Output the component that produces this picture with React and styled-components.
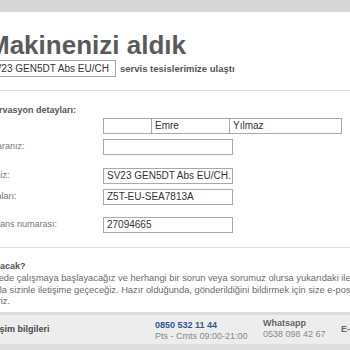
import React from 'react'
import styled, {createGlobalStyle} from 'styled-components'

const GlobalStyle = createGlobalStyle`
  body {
    margin: 0;
    background: #fff;
    font-family: "Liberation Sans", Arial, sans-serif;
  }
`

const rows = [
  {label: 'Numaranız:', value: '', top: 5},
  {label: 'Aletiniz:', value: 'SV23 GEN5DT Abs EU/CH.', top: 13},
  {label: 'Parçaları:', value: 'Z5T-EU-SEA7813A', top: 5},
  {label: 'Referans numarası:', value: '27094665', top: 12},
]

function App() {
  return (
    <Page>
      <GlobalStyle />
      <TopBar />
      <Shift>
        <Header>
          <Title>Makinenizi aldık</Title>
          <SubLine>
            <ModelBox>SV23 GEN5DT Abs EU/CH</ModelBox>
            <SubText>servis tesislerimize ulaştı</SubText>
          </SubLine>
        </Header>
        <Divider top={13} />

        <Section>
          <Heading top={13}>Rezervasyon detayları:</Heading>
          <FormRow top={2}>
            <Label />
            <NameGroup>
              <Field w={49} />
              <Field w={79}>Emre</Field>
              <Field w={113}>Yılmaz</Field>
            </NameGroup>
          </FormRow>
          {rows.map((r, i) => (
            <FormRow key={i} top={r.top}>
              <Label>{r.label}</Label>
              <Field w={130}>{r.value}</Field>
            </FormRow>
          ))}
        </Section>
        <Divider top={14} />

        <Section>
          <Heading top={12}>Ne olacak?</Heading>
          <Para>
            Atölyede çalışmaya başlayacağız ve herhangi bir sorun veya sorumuz olursa yukarıdaki iletişim bilgileriniz<br />
            yoluyla sizinle iletişime geçeceğiz. Hazır olduğunda, gönderildiğini bildirmek için size e-posta<br />
            çekeriz.
          </Para>
        </Section>

        <Footer>
          <FooterTitle>İletişim bilgileri</FooterTitle>
          <Contact w={108} shift={3}>
            <Phone>0850 532 11 44</Phone>
            <Note>Pts - Cmts 09:00-21:00</Note>
          </Contact>
          <Contact w={78}>
            <Strong>Whatsapp</Strong>
            <Note>0538 098 42 67</Note>
          </Contact>
          <Contact w={80}>
            <Strong>E-posta</Strong>
          </Contact>
        </Footer>
        <FooterBase />
      </Shift>
    </Page>
  )
}

export default App

const Page = styled.div`
width: 350px;
height: 350px;
overflow: hidden;
background: #fff;
`

const TopBar = styled.div`
height: 12px;
background: #d6d6d6;
`

const Shift = styled.div`
margin-left: -22px;
width: 480px;
`

const Header = styled.div`
padding: 16px 0 0 10px;
`

const Title = styled.h1`
margin: 0;
font-size: 26px;
line-height: 34px;
font-weight: bold;
color: #5a5a5a;
white-space: nowrap;
`

const SubLine = styled.div`
display: flex;
align-items: center;
gap: 4px;
margin: -2px 0 0 -3px;
`

const ModelBox = styled.div`
box-sizing: border-box;
width: 131px;
height: 17px;
border: 1px solid #a9a9a9;
padding: 0 2px;
font-size: 10px;
line-height: 15px;
color: #333;
white-space: nowrap;
overflow: hidden;
`

const SubText = styled.span`
font-size: 9.5px;
font-weight: bold;
color: #555;
white-space: nowrap;
`

const Divider = styled.div`
margin-top: ${p => p.top}px;
border-top: 1px solid #dedede;
`

const Section = styled.div`
display: flex;
flex-direction: column;
`

const Heading = styled.div`
margin-top: ${p => p.top}px;
font-size: 9px;
line-height: 12px;
font-weight: bold;
color: #555;
white-space: nowrap;
`

const FormRow = styled.div`
display: grid;
grid-template-columns: 125px auto;
align-items: center;
margin-top: ${p => p.top}px;
`

const Label = styled.div`
font-size: 9px;
line-height: 12px;
color: #777;
margin-top: -2px;
white-space: nowrap;
`

const NameGroup = styled.div`
display: flex;
& > div + div {
  margin-left: -1px;
}
`

const Field = styled.div`
box-sizing: border-box;
width: ${p => p.w}px;
height: 16px;
border: 1px solid #a9a9a9;
padding: 0 3px;
font-size: 10px;
line-height: 14px;
color: #333;
white-space: nowrap;
overflow: hidden;
background: #fff;
`

const Para = styled.p`
margin: 1px 0 0;
font-size: 9.3px;
line-height: 11.5px;
color: #6a6a6a;
white-space: nowrap;
`

const Footer = styled.div`
margin-top: 4px;
display: flex;
align-items: center;
height: 29px;
border-top: 3px solid #dcdcdc;
background: #ededed;
`

const FooterTitle = styled.div`
flex: 0 0 177px;
padding-left: 6px;
box-sizing: border-box;
font-size: 9px;
font-weight: bold;
color: #4a4a4a;
white-space: nowrap;
`

const Contact = styled.div`
flex: 0 0 ${p => p.w}px;
display: flex;
flex-direction: column;
margin-top: ${p => p.shift || 0}px;
font-size: 9px;
line-height: 11px;
white-space: nowrap;
`

const Phone = styled.div`
font-weight: bold;
color: #2d5b8a;
`

const Strong = styled.div`
font-weight: bold;
color: #666;
`

const Note = styled.div`
color: #8a8a8a;
`

const FooterBase = styled.div`
height: 20px;
background: #dcdcdc;
`
